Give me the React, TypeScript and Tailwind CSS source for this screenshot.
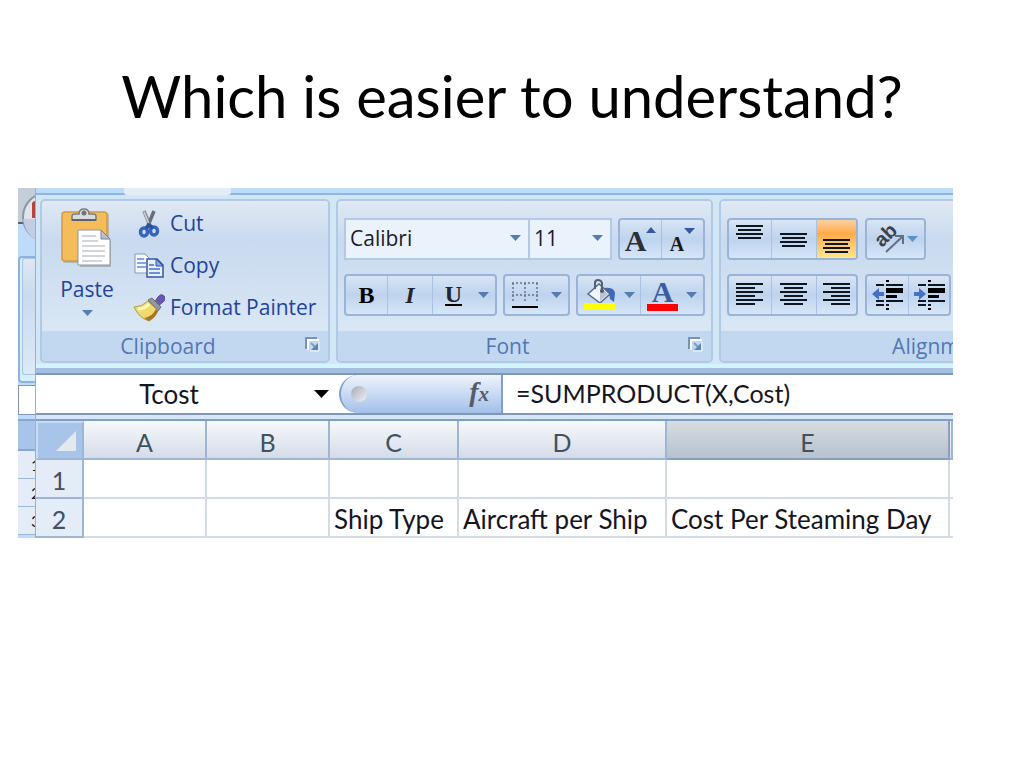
import type { ReactNode } from "react";

const ribbonFont = "font-['Open_Sans',sans-serif]";
const buttonBox =
  "flex h-[42px] shrink-0 overflow-hidden rounded-[4px] border-2 border-[#9ab4d9] bg-linear-to-b from-[#d8e5f5] via-[#bed3ee] via-50% to-[#d6e6f8]";

function Caret({ className = "text-[#567db1]" }: { className?: string }) {
  return (
    <svg className={`h-[6px] w-[11px] shrink-0 ${className}`} viewBox="0 0 11 6" aria-hidden="true">
      <path d="M0 0h11L5.5 6z" fill="currentColor" />
    </svg>
  );
}

function Tool({ label, className, children }: { label: string; className: string; children: ReactNode }) {
  return (
    <button type="button" aria-label={label} className={`flex h-full items-center justify-center ${className}`}>
      {children}
    </button>
  );
}

function Group({ label, className, children }: { label: string; className: string; children: ReactNode }) {
  return (
    <section
      aria-label={label}
      className={`flex h-[164px] shrink-0 flex-col overflow-hidden rounded-[5px] border-2 border-[#b0c9e4] ${className}`}
    >
      <div className="h-[130px] bg-linear-to-b from-[#e0e9f4] from-0% via-[#c9daef] via-30% to-[#d9e7f5]">{children}</div>
      <div className="relative flex h-[30px] items-center justify-center bg-[#c1d8f0] pr-[34px] text-[21px] leading-[32px] text-[#5277b4]">
        {label}
        <button type="button" aria-label={`${label} options`} className="absolute right-[8px] top-[6px]">
          <svg className="h-[15px] w-[15px]" viewBox="0 0 15 15" fill="none" aria-hidden="true">
            <path d="M3 13V3h11" stroke="#fff" strokeWidth="2" />
            <path d="M1 12V1h11" stroke="#7593b8" strokeWidth="2" />
            <path d="M6 6l4 4" stroke="#7d9ec4" strokeWidth="2" />
            <path d="M13 6v7H6z" fill="#5f87b5" />
            <path d="M14 5v9H5" stroke="#eef6ff" />
          </svg>
        </button>
      </div>
    </section>
  );
}

function Lines({ rows }: { rows: [number, number, number][] }) {
  return (
    <svg className="h-[38px] w-[30px]" viewBox="0 0 30 38" aria-hidden="true">
      {rows.map(([x, y, w]) => (
        <rect key={y} x={x} y={y} width={w} height="2" fill="#10161f" />
      ))}
    </svg>
  );
}

function PasteIcon() {
  return (
    <svg className="h-[60px] w-[54px]" viewBox="0 0 54 60" aria-hidden="true">
      <rect x="3" y="5" width="46" height="50" rx="3" fill="#8d8067" opacity=".4" />
      <rect x="2" y="4" width="45" height="49" rx="3" fill="#f4bd5a" stroke="#d29b45" strokeWidth="1.5" />
      <path d="M12 12V8q0-2 3-2h4q0-5 5-5t5 5h4q3 0 3 2v4z" fill="#d9dde2" stroke="#777d85" strokeWidth="1.5" />
      <path d="M12 12h24" stroke="#5d6269" strokeWidth="2" />
      <circle cx="24" cy="5" r="2.5" fill="#7c7265" />
      <path d="M20 24h23l8 9v26H20z" fill="#8a8a8a" opacity=".5" />
      <path d="M18 22h23l9 9v26H18z" fill="#fff" stroke="#8f97a3" />
      <path d="M41 22v9h9z" fill="#b6c2d0" stroke="#75818f" />
      <path d="M22 28h14M22 33h16M22 38h23M22 43h23M22 48h23M22 53h20" stroke="#c4c8ce" strokeWidth="1.5" />
    </svg>
  );
}

function CutIcon() {
  return (
    <svg className="h-[28px] w-[30px]" viewBox="0 0 30 28" fill="none" aria-hidden="true">
      <path d="M10 1l7 17" stroke="#8d9096" strokeWidth="3.5" />
      <path d="M20 1l-7 17" stroke="#686d76" strokeWidth="3.5" />
      <path d="M10 2l6 14" stroke="#cbd0d6" strokeWidth="1.5" />
      <ellipse cx="10" cy="22" rx="3.5" ry="4" stroke="#3564bd" strokeWidth="3.5" />
      <ellipse cx="20" cy="21" rx="3.5" ry="4" stroke="#3564bd" strokeWidth="3.5" />
      <path d="M12 18l3-3 4 3" stroke="#2850a4" strokeWidth="3.5" />
    </svg>
  );
}

function CopyIcon() {
  return (
    <svg className="h-[26px] w-[30px]" viewBox="0 0 30 26" aria-hidden="true">
      <path d="M1 1h10l5 5v14H1z" fill="#f3f7fd" stroke="#8799b8" />
      <path d="M3 6h7M3 10h9M3 14h9" stroke="#8aa6d8" strokeWidth="2" />
      <path d="M13 6h10l6 6v12H13z" fill="#e9f0fd" stroke="#3657a8" strokeWidth="1.5" />
      <path d="M22 6v7h7z" fill="#8aa9e0" stroke="#3657a8" />
      <path d="M15 12h5M15 16h11M15 20h11" stroke="#6c91dc" strokeWidth="2" />
    </svg>
  );
}

function PainterIcon() {
  return (
    <svg className="h-[28px] w-[32px]" viewBox="0 0 32 28" aria-hidden="true">
      <path d="M21 9l4-6q3-4 6-1t-1 6l-6 5z" fill="#6a58ae" stroke="#5a4b98" />
      <path d="M15 6l4-2 9 9-3 4z" fill="#93979d" stroke="#6c7076" />
      <path d="M15 7l10 10q-3 7-9 10Q6 24 1 13q8 0 14-6z" fill="#f1da6c" stroke="#b8993f" />
      <path d="M5 15q7 0 11-5" fill="none" stroke="#fff6b9" strokeWidth="3" />
      <path d="M25 17q-3 7-9 10l-5-3q8-1 12-9z" fill="#a5762b" />
    </svg>
  );
}

function BordersIcon() {
  return (
    <svg className="h-[28px] w-[28px]" viewBox="0 0 28 28" fill="none" aria-hidden="true">
      <path d="M1 2h26M1 14h26M2 2v20M14 2v20M26 2v20" stroke="#66748c" strokeWidth="1.5" strokeDasharray="2 2" />
      <path d="M1 26h26" stroke="#000" strokeWidth="2" />
    </svg>
  );
}

function FillIcon() {
  return (
    <svg className="h-[32px] w-[32px]" viewBox="0 0 32 32" aria-hidden="true">
      <path d="M20 9q10-1 11 5l-1 9-4-3q0-5-4-6z" fill="#3e68b8" />
      <path d="M4 15L15 5l11 10-10 9z" fill="#f0f4fb" stroke="#5c6c88" strokeWidth="1.5" />
      <path d="M16 8l8 7-8 7z" fill="#b9c4d6" />
      <path d="M11 10V4q0-3 3-3t4 3v8" fill="none" stroke="#55606f" strokeWidth="2" />
      <circle cx="18" cy="12" r="2" fill="#4d5766" />
      <rect x="0" y="24" width="31" height="7" fill="#ff0" />
    </svg>
  );
}

function IndentIcon({ right = false }: { right?: boolean }) {
  return (
    <svg className="h-[30px] w-[31px]" viewBox="0 0 31 30" aria-hidden="true">
      <path d="M4 5h8M14 5h17M4 21h8M14 21h17M4 25h8M14 25h3" stroke="#10161f" strokeWidth="2" />
      <path d="M14 8h17v5H14zM14 15h11v3H14z" fill="#000" />
      <path d="M14 0h3v2h-3zM14 28h3v2h-3z" fill="#000" />
      {right ? (
        <path d="M12 14L5 8v4H0v4h5v4z" fill="#4470c8" />
      ) : (
        <path d="M0 14l7-6v4h5v4H7v4z" fill="#4470c8" />
      )}
    </svg>
  );
}

function Clipboard() {
  const actions = [
    { label: "Cut", icon: <CutIcon /> },
    { label: "Copy", icon: <CopyIcon /> },
    { label: "Format Painter", icon: <PainterIcon /> },
  ];
  return (
    <Group label="Clipboard" className="w-[290px]">
      <div className="flex pl-[14px] text-[21px] text-[#24439a]">
        <button type="button" className="flex w-[62px] flex-col items-center pt-[7px] leading-[24px]">
          <PasteIcon />
          <span className="pt-[9px]">Paste</span>
          <Caret className="mt-[9px] text-[#567db1]" />
        </button>
        <div className="flex flex-col pl-[15px] pt-[2px]">
          {actions.map((a) => (
            <button key={a.label} type="button" className="flex h-[42px] items-center gap-[5px] whitespace-nowrap">
              <span className="flex w-[32px] justify-center">{a.icon}</span>
              {a.label}
            </button>
          ))}
        </div>
      </div>
    </Group>
  );
}

function FontGroup() {
  const select = "h-full w-full appearance-none bg-[#eaf2fc] pl-[4px] text-[21px] text-[#1c1b2b] outline-none";
  return (
    <Group label="Font" className="w-[377px]">
      <div className="flex flex-col gap-[14px] px-[6px] pt-[17px]">
        <div className="flex gap-[6px]">
          <div className="flex h-[42px] w-[268px]">
            <div className="relative w-[186px] border-2 border-[#b3c9e6]">
              <select aria-label="Font name" className={select}>
                <option>Calibri</option>
              </select>
              <Caret className="pointer-events-none absolute right-[7px] top-[15px] text-[#567db1]" />
            </div>
            <div className="relative w-[82px] border-2 border-l-0 border-[#b3c9e6]">
              <select aria-label="Font size" className={select}>
                <option>11</option>
              </select>
              <Caret className="pointer-events-none absolute right-[7px] top-[15px] text-[#567db1]" />
            </div>
          </div>
          <div className={`${buttonBox} w-[87px]`}>
            <Tool label="Grow font" className="w-[42px] border-r border-[#a9c1e2]">
              <span className="pt-[4px] font-['Liberation_Serif',serif] text-[30px] font-bold leading-[30px] text-[#2c2f36]">A</span>
              <svg className="mb-[18px] h-[6px] w-[10px]" viewBox="0 0 10 6" aria-hidden="true">
                <path d="M0 6h10L5 0z" fill="#35589f" />
              </svg>
            </Tool>
            <Tool label="Shrink font" className="flex-1">
              <span className="pt-[10px] font-['Liberation_Serif',serif] text-[20px] font-bold leading-[24px] text-[#17191d]">A</span>
              <Caret className="mb-[16px] text-[#35589f]" />
            </Tool>
          </div>
        </div>
        <div className="flex gap-[6px] font-['Liberation_Serif',serif] text-[24px] font-bold text-[#22252c]">
          <div className={`${buttonBox} w-[153px]`}>
            <Tool label="Bold" className="w-[42px] border-r border-[#a9c1e2]">
              <span className="font-black text-black">B</span>
            </Tool>
            <Tool label="Italic" className="w-[45px] border-r border-[#a9c1e2]">
              <span className="italic">I</span>
            </Tool>
            <Tool label="Underline" className="flex-1 gap-[16px] pl-[6px]">
              <span className="border-b-2 border-black leading-[20px]">U</span>
              <Caret />
            </Tool>
          </div>
          <div className={`${buttonBox} w-[67px]`}>
            <Tool label="Borders" className="w-full gap-[12px]">
              <BordersIcon />
              <Caret />
            </Tool>
          </div>
          <div className={`${buttonBox} w-[129px]`}>
            <Tool label="Fill color" className="w-[63px] gap-[8px] border-r border-[#a9c1e2]">
              <FillIcon />
              <Caret />
            </Tool>
            <Tool label="Font color" className="flex-1 gap-[8px]">
              <span className="flex w-[31px] flex-col items-center border-b-[7px] border-[#f00] text-[30px] leading-[24px] text-[#3c5d9c]">
                A
              </span>
              <Caret />
            </Tool>
          </div>
        </div>
      </div>
    </Group>
  );
}

function AlignmentGroup() {
  return (
    <Group label="Alignment" className="w-[480px]">
      <div className="flex flex-col gap-[14px] px-[6px] pt-[17px]">
        <div className="flex gap-[7px]">
          <div className={`${buttonBox} w-[131px]`}>
            <Tool label="Top align" className="w-[43px] border-r border-[#a9c1e2]">
              <Lines rows={[[1, 5, 27], [3, 9, 23], [1, 13, 27], [3, 17, 23]]} />
            </Tool>
            <Tool label="Middle align" className="w-[45px] border-r border-[#a9c1e2]">
              <Lines rows={[[1, 13, 27], [3, 17, 23], [1, 21, 27], [3, 25, 23]]} />
            </Tool>
            <Tool label="Bottom align" className="flex-1 bg-linear-to-b from-[#fbd0a0] via-[#ffab48] via-35% to-[#ffe68e]">
              <Lines rows={[[1, 19, 27], [3, 23, 23], [1, 27, 27], [3, 31, 23]]} />
            </Tool>
          </div>
          <div className={`${buttonBox} w-[61px]`}>
            <Tool label="Orientation" className="w-full gap-[2px]">
              <svg className="h-[30px] w-[32px]" viewBox="0 0 32 30" aria-hidden="true">
                <text x="9" y="24" transform="rotate(-45 9 24)" fontFamily="Liberation Sans" fontSize="20" fontWeight="bold" fill="#3c424c">
                  ab
                </text>
                <path d="M13 28L29 13M22 12h8v8" fill="none" stroke="#646e7d" strokeWidth="2" />
              </svg>
              <Caret className="text-[#5a93c8]" />
            </Tool>
          </div>
        </div>
        <div className="flex gap-[7px]">
          <div className={`${buttonBox} w-[131px]`}>
            <Tool label="Align left" className="w-[43px] border-r border-[#a9c1e2]">
              <Lines rows={[[1, 7, 27], [1, 11, 19], [1, 15, 27], [1, 19, 19], [1, 23, 27], [1, 27, 19]]} />
            </Tool>
            <Tool label="Center" className="w-[45px] border-r border-[#a9c1e2]">
              <Lines rows={[[1, 7, 27], [5, 11, 19], [1, 15, 27], [5, 19, 19], [1, 23, 27], [5, 27, 19]]} />
            </Tool>
            <Tool label="Align right" className="flex-1">
              <Lines rows={[[1, 7, 27], [9, 11, 19], [1, 15, 27], [9, 19, 19], [1, 23, 27], [9, 27, 19]]} />
            </Tool>
          </div>
          <div className={`${buttonBox} w-[86px]`}>
            <Tool label="Decrease indent" className="w-[42px] border-r border-[#a9c1e2]">
              <IndentIcon />
            </Tool>
            <Tool label="Increase indent" className="flex-1">
              <IndentIcon right />
            </Tool>
          </div>
        </div>
      </div>
    </Group>
  );
}

function FormulaBar() {
  return (
    <div className="flex h-[42px] border-y-2 border-[#8097bb] bg-white text-[#15151f]">
      <div className="flex w-[303px] shrink-0 items-center">
        <input
          aria-label="Name box"
          defaultValue="Tcost"
          className="h-full w-[266px] bg-transparent text-center text-[26px] outline-none"
        />
        <button type="button" aria-label="Names" className="pl-[12px]">
          <svg className="h-[8px] w-[15px]" viewBox="0 0 15 8" aria-hidden="true">
            <path d="M0 0h15L7.5 8z" fill="#000" />
          </svg>
        </button>
      </div>
      <div className="flex w-[164px] shrink-0 items-center justify-between rounded-l-full border-l-2 border-r-2 border-[#7f9fcb] bg-linear-to-b from-[#eff4fb] to-[#a3c0e9] pl-[10px] pr-[12px]">
        <span className="h-[16px] w-[16px] rounded-full bg-linear-to-br from-[#a7abb8] to-[#f1f2f8]" />
        <button type="button" aria-label="Insert function" className="font-['Liberation_Serif',serif] font-bold italic leading-[30px] text-[#555d6b]">
          <span className="text-[28px]">f</span>
          <span className="text-[21px]">x</span>
        </button>
      </div>
      <input aria-label="Formula" defaultValue="=SUMPRODUCT(X,Cost)" className="min-w-0 flex-1 pl-[13px] text-[25px] outline-none" />
    </div>
  );
}

function Sheet() {
  const rows = [
    ["", "", "", "", ""],
    ["", "", "Ship Type", "Aircraft per Ship", "Cost Per Steaming Day"],
  ];
  const head = "border-b-2 border-r-2 border-[#9eb6d6] bg-linear-to-b from-[#f6f9fc] to-[#d5dce8] font-normal";
  return (
    <table className="w-full table-fixed border-separate border-spacing-0 text-[26px] leading-[30px] text-[#15151f]">
      <colgroup>
        <col className="w-[48px]" />
        <col className="w-[123px]" />
        <col className="w-[123px]" />
        <col className="w-[129px]" />
        <col className="w-[208px]" />
        <col className="w-[283px]" />
        <col />
      </colgroup>
      <thead>
        <tr className="h-[39px] text-[25px] text-[#41525f]">
          <th aria-label="Select all" className="border-2 border-l-[#c8dcf4] border-t-[#c8dcf4] border-[#9eb6d6] bg-[#a9c4e9] p-0">
            <svg className="ml-auto mr-[6px] h-[20px] w-[20px]" viewBox="0 0 20 20" aria-hidden="true">
              <path d="M20 0v20H0z" fill="#e4e8ef" />
            </svg>
          </th>
          {["A", "B", "C", "D"].map((c) => (
            <th key={c} scope="col" className={`p-0 pt-[4px] ${head}`}>{c}</th>
          ))}
          <th scope="col" className="border-b-2 border-r-2 border-[#8b9fbd] bg-linear-to-b from-[#d8dce0] to-[#b6c2d0] p-0 pt-[4px] font-normal">
            E
          </th>
          <td className={head} />
        </tr>
      </thead>
      <tbody>
        {rows.map((cells, i) => (
          <tr key={i} className="h-[39px]">
            <th scope="row" className="border-b-2 border-r-2 border-[#9eb6d6] bg-[#e4ecf7] p-0 pt-[3px] text-[25px] font-normal text-[#41525f]">
              {i + 1}
            </th>
            {cells.map((cell, j) => (
              <td key={j} className="whitespace-nowrap border-b-2 border-r-2 border-[#d3dbe8] p-0 pl-[4px] pt-[3px]">{cell}</td>
            ))}
            <td className="border-b-2 border-[#d3dbe8] p-0" />
          </tr>
        ))}
      </tbody>
    </table>
  );
}

// sliver of the other workbook window that shows at the left edge
function BackWindow() {
  return (
    <div className="flex w-[17px] shrink-0 flex-col overflow-hidden bg-[#bfdbfb]" aria-hidden="true">
      <svg className="h-[68px] w-[17px] shrink-0" viewBox="0 0 17 68">
        <rect width="17" height="35" fill="#c3ced9" />
        <path d="M0 35h6" stroke="#59616b" strokeWidth="2" />
        <circle cx="29" cy="29" r="24" fill="#dfe4ed" stroke="#8d95a3" strokeWidth="2" />
        <path d="M5 31h12v20Q7 45 5 31z" fill="#c3cee4" />
        <path d="M14 15q1-2 3-2v17h-3z" fill="#b4473a" />
      </svg>
      <div className="h-[127px] shrink-0 rounded-l-[4px] border-2 border-r-0 border-[#8fb2dc] bg-[#d6f0fb] pl-[2px]">
        <div className="h-[117px] rounded-l-[3px] border border-r-0 border-[#a9c4e1] bg-linear-to-b from-[#dfe8f3] via-[#cadbef] via-30% to-[#dce9f6]" />
      </div>
      <div className="mt-[2px] h-[30px] shrink-0 border border-r-0 border-[#8097bb] bg-white" />
      <div className="mt-[4px] h-[32px] shrink-0 border-y-2 border-[#8aa6cd] bg-[#a9c4e9]" />
      {[1, 2, 3].map((n) => (
        <div key={n} className="h-[28px] shrink-0 border-b border-[#9eb6d6] bg-[#e4ecf7] pl-[13px] text-[16px] leading-[28px] text-[#15151f]">
          {n}
        </div>
      ))}
    </div>
  );
}

export default function App() {
  return (
    <main className="min-h-screen bg-white pb-16 pl-[18px] pr-[71px] font-['Lato',sans-serif]">
      <h1 className="-mr-[53px] pt-[60px] text-center text-[58px] leading-[72px] text-black">Which is easier to understand?</h1>
      <div className="mt-[56px] flex h-[350px] overflow-hidden">
        <BackWindow />
        <div className="min-w-0 flex-1 overflow-hidden border-l border-[#8fb2dc]">
          <div className={ribbonFont}>
            <div className="flex h-[7px] border-b-2 border-[#8fb4e6] bg-[#bddbfb]">
              <div className="ml-[88px] h-[7px] w-[107px] rounded-b-[3px] bg-[#e3edf8]" />
            </div>
            <div className="flex h-[173px] gap-[6px] border-b-4 border-[#d3f3fd] bg-[#d3e6f6] pl-[4px] pt-[4px]">
              <Clipboard />
              <FontGroup />
              <AlignmentGroup />
            </div>
            <div className="h-[5px] bg-[#a5bfe0]" />
          </div>
          <FormulaBar />
          <div className="h-[6px] border-b-2 border-[#7f9fcb] bg-[#d8e7f8]" />
          <Sheet />
        </div>
      </div>
    </main>
  );
}
